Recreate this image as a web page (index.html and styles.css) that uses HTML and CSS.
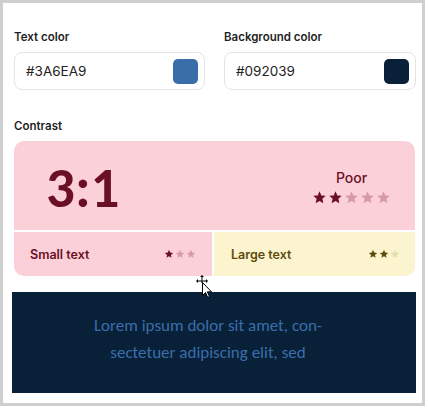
FILE: index.html
```html
<!DOCTYPE html>
<html>
<head>
<meta charset="utf-8">
<link rel="stylesheet" href="styles.css">
</head>
<body>
<div class="frame">
  <div class="fields">
    <div class="field">
      <div class="label">Text color</div>
      <div class="input"><span class="value">#3A6EA9</span><span class="swatch swatch-fg"></span></div>
    </div>
    <div class="field">
      <div class="label">Background color</div>
      <div class="input"><span class="value">#092039</span><span class="swatch swatch-bg"></span></div>
    </div>
  </div>
  <div class="label contrast-label">Contrast</div>
  <div class="card">
    <div class="card-top">
      <div class="ratio">3:1</div>
      <div class="rating">
        <div class="rating-word">Poor</div>
        <div class="stars big">
          <svg viewBox="0 0 24 24" class="on"><path d="M12 2l2.9 6.6 7.1.7-5.4 4.8 1.6 7-6.2-3.7-6.2 3.7 1.6-7L2 9.3l7.1-.7z"/></svg>
          <svg viewBox="0 0 24 24" class="on"><path d="M12 2l2.9 6.6 7.1.7-5.4 4.8 1.6 7-6.2-3.7-6.2 3.7 1.6-7L2 9.3l7.1-.7z"/></svg>
          <svg viewBox="0 0 24 24" class="off"><path d="M12 2l2.9 6.6 7.1.7-5.4 4.8 1.6 7-6.2-3.7-6.2 3.7 1.6-7L2 9.3l7.1-.7z"/></svg>
          <svg viewBox="0 0 24 24" class="off"><path d="M12 2l2.9 6.6 7.1.7-5.4 4.8 1.6 7-6.2-3.7-6.2 3.7 1.6-7L2 9.3l7.1-.7z"/></svg>
          <svg viewBox="0 0 24 24" class="off"><path d="M12 2l2.9 6.6 7.1.7-5.4 4.8 1.6 7-6.2-3.7-6.2 3.7 1.6-7L2 9.3l7.1-.7z"/></svg>
        </div>
      </div>
    </div>
    <div class="card-bottom">
      <div class="cell cell-small">
        <span>Small text</span>
        <div class="stars small">
          <svg viewBox="0 0 24 24" class="on"><path d="M12 2l2.9 6.6 7.1.7-5.4 4.8 1.6 7-6.2-3.7-6.2 3.7 1.6-7L2 9.3l7.1-.7z"/></svg>
          <svg viewBox="0 0 24 24" class="off"><path d="M12 2l2.9 6.6 7.1.7-5.4 4.8 1.6 7-6.2-3.7-6.2 3.7 1.6-7L2 9.3l7.1-.7z"/></svg>
          <svg viewBox="0 0 24 24" class="off"><path d="M12 2l2.9 6.6 7.1.7-5.4 4.8 1.6 7-6.2-3.7-6.2 3.7 1.6-7L2 9.3l7.1-.7z"/></svg>
        </div>
      </div>
      <div class="cell cell-large">
        <span>Large text</span>
        <div class="stars small">
          <svg viewBox="0 0 24 24" class="on"><path d="M12 2l2.9 6.6 7.1.7-5.4 4.8 1.6 7-6.2-3.7-6.2 3.7 1.6-7L2 9.3l7.1-.7z"/></svg>
          <svg viewBox="0 0 24 24" class="on"><path d="M12 2l2.9 6.6 7.1.7-5.4 4.8 1.6 7-6.2-3.7-6.2 3.7 1.6-7L2 9.3l7.1-.7z"/></svg>
          <svg viewBox="0 0 24 24" class="off"><path d="M12 2l2.9 6.6 7.1.7-5.4 4.8 1.6 7-6.2-3.7-6.2 3.7 1.6-7L2 9.3l7.1-.7z"/></svg>
        </div>
      </div>
    </div>
  </div>
  <div class="preview">
    <p>Lorem ipsum dolor sit amet, con-<br>sectetuer adipiscing elit, sed</p>
  </div>
  <svg class="cursor" viewBox="0 0 20 26" width="20" height="26">
    <path d="M9 1l-2 2h1.5v3.5H5V5l-2 2 2 2V7.5h3.5V9h1V7.5H13V9l2-2-2-2v1.5H9.5V3H11z" fill="#000"/>
    <path d="M9.5 8.5v13l3-3 2.2 4.8 1.8-.8-2.2-4.7h4.2z" fill="#fff" stroke="#000" stroke-width="1"/>
  </svg>
</div>
</body>
</html>
```
FILE: styles.css
```css
* { box-sizing: border-box; }
html, body { margin: 0; padding: 0; background: #fff; }
body { font-family: Inter, "Noto Sans", sans-serif; }

.frame {
  position: relative;
  width: 425px;
  height: 406px;
  border: 3px solid #cfcfcf;
  padding: 26px 8px 0 11px;
}

.fields {
  display: grid;
  grid-template-columns: 191px 192px;
  column-gap: 19px;
}

.label {
  font-size: 11.5px;
  font-weight: 600;
  color: #1f1f1f;
  line-height: 16px;
  height: 16px;
}

.input {
  margin-top: 7px;
  height: 38px;
  border: 1px solid #e4e4e4;
  border-radius: 8px;
  display: flex;
  align-items: center;
  justify-content: space-between;
  padding: 0 6px 0 11px;
}

.value { font-size: 13.5px; color: #222; }

.swatch { width: 25px; height: 25px; border-radius: 5px; }
.swatch-fg { background: #3A6EA9; }
.swatch-bg { background: #092039; }

.contrast-label { margin-top: 28px; }

.card {
  margin-top: 7px;
  width: 401px;
  border-radius: 10px;
  overflow: hidden;
  background: #fbd0d9;
}

.card-top {
  display: flex;
  align-items: center;
  justify-content: space-between;
  padding: 0 24px 0 32px;
  border-bottom: 2px solid #fff;
  height: 91px;
}

.ratio {
  font-family: Carlito, Lato, sans-serif;
  font-weight: 700;
  font-size: 57px;
  color: #6b0f24;
  line-height: 1;
  margin-top: 3px;
}

.rating { display: flex; flex-direction: column; align-items: center; margin-top: 2px; }
.rating-word { font-size: 14px; font-weight: 500; color: #6b0f24; line-height: 18px; margin-bottom: 3px; }

.stars { display: flex; }
.stars svg { display: block; }
.stars.big { gap: 1px; }
.stars.big svg { width: 15px; height: 15px; }
.stars.small { gap: 1px; }
.stars.small svg { width: 10px; height: 10px; }

.card .on { fill: #6b0f24; }
.card .off { fill: #d899ab; }

.card-bottom { display: flex; height: 44px; }
.cell {
  flex: 1;
  display: flex;
  align-items: center;
  justify-content: space-between;
  font-size: 12.5px;
  font-weight: 600;
}
.cell-small { padding: 0 16px 0 16px; color: #6b0f24; border-right: 2px solid #fff; flex: 0 0 200px; }
.cell-large { padding: 0 15px 0 17px; background: #fbf4cf; color: #5e4b0d; }
.cell-large .on { fill: #5e4b0d; }
.cell-large .off { fill: #e5dcb0; }

.preview {
  margin: 16px 0 0 -2px;
  width: 404px;
  height: 101px;
  background: #092039;
  display: flex;
  align-items: center;
  justify-content: center;
  padding: 0 12px 7px 0;
}
.preview p {
  margin: 0;
  font-family: Carlito, Lato, sans-serif;
  font-size: 17px;
  line-height: 27px;
  color: #3A6EA9;
  text-align: center;
}

.cursor {
  position: absolute;
  left: 190px;
  top: 271px;
}
```
